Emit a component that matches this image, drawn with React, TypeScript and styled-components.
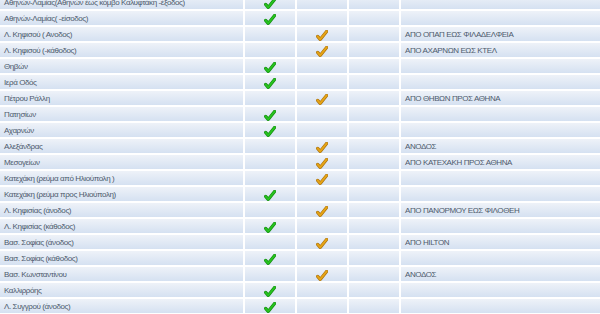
import React from "react";
import styled, { createGlobalStyle } from "styled-components";

const GlobalStyle = createGlobalStyle`
  html, body {
    margin: 0;
    padding: 0;
    background: #ffffff;
    overflow: hidden;
  }
`;

type Status = "green" | "orange" | null;

interface Road {
  name: string;
  status: Status;
  note?: string;
}

const roads: Road[] = [
  { name: "Αθηνών-Λαμίας(Αθηνών έως κόμβο Καλυφτάκη -έξοδος)", status: "green" },
  { name: "Αθηνών-Λαμίας( -είσοδος)", status: "green" },
  { name: "Λ. Κηφισού ( Ανοδος)", status: "orange", note: "ΑΠΟ ΟΠΑΠ ΕΩΣ ΦΙΛΑΔΕΛΦΕΙΑ" },
  { name: "Λ. Κηφισού (-κάθοδος)", status: "orange", note: "ΑΠΟ ΑΧΑΡΝΩΝ ΕΩΣ ΚΤΕΛ" },
  { name: "Θηβών", status: "green" },
  { name: "Ιερά Οδός", status: "green" },
  { name: "Πέτρου Ράλλη", status: "orange", note: "ΑΠΟ ΘΗΒΩΝ ΠΡΟΣ ΑΘΗΝΑ" },
  { name: "Πατησίων", status: "green" },
  { name: "Αχαρνών", status: "green" },
  { name: "Αλεξάνδρας", status: "orange", note: "ΑΝΟΔΟΣ" },
  { name: "Μεσογείων", status: "orange", note: "ΑΠΟ ΚΑΤΕΧΑΚΗ ΠΡΟΣ ΑΘΗΝΑ" },
  { name: "Κατεχάκη (ρεύμα από Ηλιούπολη )", status: "orange" },
  { name: "Κατεχάκη (ρεύμα προς Ηλιούπολη)", status: "green" },
  { name: "Λ. Κηφισίας (άνοδος)", status: "orange", note: "ΑΠΟ ΠΑΝΟΡΜΟΥ ΕΩΣ ΦΙΛΟΘΕΗ" },
  { name: "Λ. Κηφισίας (κάθοδος)", status: "green" },
  { name: "Βασ. Σοφίας (άνοδος)", status: "orange", note: "ΑΠΟ HILTON" },
  { name: "Βασ. Σοφίας (κάθοδος)", status: "green" },
  { name: "Βασ. Κωνσταντίνου", status: "orange", note: "ΑΝΟΔΟΣ" },
  { name: "Καλλιρρόης", status: "green" },
  { name: "Λ. Συγγρού (άνοδος)", status: "green" },
];

const Table = styled.div`
  display: grid;
  grid-template-columns: 243px 50px 50px 50px 1fr;
  grid-auto-rows: 14px;
  gap: 2px;
  margin-top: -5px;
  font-family: "Liberation Sans", Arial, sans-serif;
  font-size: 8px;
  letter-spacing: -0.4px;
  color: #4d5a6c;
`;

const Cell = styled.div<{ $text?: boolean }>`
  display: flex;
  align-items: center;
  justify-content: ${({ $text }) => ($text ? "flex-start" : "center")};
  padding: 0 4px;
  background: linear-gradient(#eef2f8, #d5e1f1);
  white-space: nowrap;
  overflow: hidden;
`;

const CheckIcon = styled.svg`
  width: 12px;
  height: 11px;
  margin-top: 2px;
`;

const Check: React.FC<{ tone: "green" | "orange" }> = ({ tone }) => {
  const fill = tone === "green" ? "#27c21f" : "#e6a416";
  const edge = tone === "green" ? "#138a10" : "#a8700c";
  return (
    <CheckIcon viewBox="0 0 12 11">
      <path d="M1.6 6.4 L4.2 9.4 L10.6 1.4" fill="none" stroke={edge} strokeWidth="3.2" strokeLinecap="round" strokeLinejoin="round" />
      <path d="M1.6 6.4 L4.2 9.4 L10.6 1.4" fill="none" stroke={fill} strokeWidth="2" strokeLinecap="round" strokeLinejoin="round" />
    </CheckIcon>
  );
};

const App: React.FC = () => (
  <>
    <GlobalStyle />
    <Table>
      {roads.map((road, i) => (
        <React.Fragment key={i}>
          <Cell $text>{road.name}</Cell>
          <Cell>{road.status === "green" && <Check tone="green" />}</Cell>
          <Cell>{road.status === "orange" && <Check tone="orange" />}</Cell>
          <Cell />
          <Cell $text>{road.note}</Cell>
        </React.Fragment>
      ))}
    </Table>
  </>
);

export default App;
